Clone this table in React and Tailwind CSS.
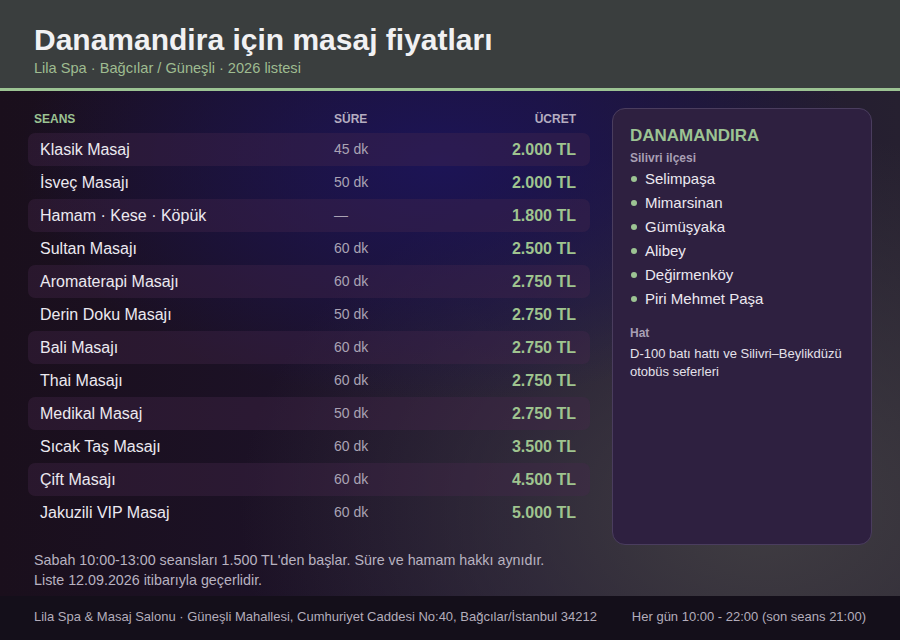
import React from 'react';

const rows = [
  ['Klasik Masaj', '45 dk', '2.000 TL'],
  ['İsveç Masajı', '50 dk', '2.000 TL'],
  ['Hamam · Kese · Köpük', '—', '1.800 TL'],
  ['Sultan Masajı', '60 dk', '2.500 TL'],
  ['Aromaterapi Masajı', '60 dk', '2.750 TL'],
  ['Derin Doku Masajı', '50 dk', '2.750 TL'],
  ['Bali Masajı', '60 dk', '2.750 TL'],
  ['Thai Masajı', '60 dk', '2.750 TL'],
  ['Medikal Masaj', '50 dk', '2.750 TL'],
  ['Sıcak Taş Masajı', '60 dk', '3.500 TL'],
  ['Çift Masajı', '60 dk', '4.500 TL'],
  ['Jakuzili VIP Masaj', '60 dk', '5.000 TL'],
];

const areas = ['Selimpaşa', 'Mimarsinan', 'Gümüşyaka', 'Alibey', 'Değirmenköy', 'Piri Mehmet Paşa'];

export default function App() {
  return (
    <div className="w-[900px] h-[640px] flex flex-col overflow-hidden font-['Liberation_Sans',Arial,sans-serif] bg-[#1a1120]">
      {/* Header */}
      <header className="h-[91px] shrink-0 bg-[#3a3e3e] border-b-[3px] border-[#9cc393] px-[34px] pt-[22px]">
        <h1 className="text-[30px] leading-[36px] font-bold text-[#f1f1f3]">Danamandira için masaj fiyatları</h1>
        <p className="text-[14.6px] leading-[18px] mt-[1px] text-[#9fbc91]">Lila Spa · Bağcılar / Güneşli · 2026 listesi</p>
      </header>

      {/* Main */}
      <main className="flex-1 flex flex-col bg-[radial-gradient(ellipse_420px_240px_at_440px_70px,#1c1456_0%,rgba(28,20,86,0)_100%),radial-gradient(ellipse_520px_380px_at_760px_420px,#403d42_0%,rgba(64,61,66,0)_100%),linear-gradient(90deg,#1a0f1c_0%,#1e1430_60%,#262030_100%)]">
        <div className="flex gap-[22px] pl-[28px] pr-[28px] pt-[18px]">
          {/* Price table */}
          <div className="w-[562px] shrink-0">
            <div className="flex items-center h-[20px] px-[6px] text-[12px] font-bold">
              <span className="w-[300px] text-[#9cc393]">SEANS</span>
              <span className="flex-1 text-[#b5adc0]">SÜRE</span>
              <span className="text-[#b5adc0] mr-[8px]">ÜCRET</span>
            </div>
            <div className="mt-[4px] flex flex-col">
              {rows.map(([name, dur, price], i) => (
                <div
                  key={name}
                  className={
                    'flex items-center h-[33px] px-[12px] rounded-[7px] ' +
                    (i % 2 === 0 ? 'bg-[rgba(72,40,78,0.35)]' : '')
                  }
                >
                  <span className="w-[294px] text-[16px] text-[#ece9f0]">{name}</span>
                  <span className="flex-1 text-[14px] text-[#aaa3b4]">{dur}</span>
                  <span className="text-[16px] font-bold text-[#9fc48f] mr-[2px]">{price}</span>
                </div>
              ))}
            </div>
          </div>

          {/* Side card */}
          <aside className="w-[260px] shrink-0 h-[437px] mt-[-1px] rounded-[13px] bg-[#2e2040] border border-[#4a3d5e] px-[17px] pt-[16px]">
            <h2 className="text-[17px] leading-[22px] font-bold text-[#9cc393]">DANAMANDIRA</h2>
            <p className="text-[12px] font-bold text-[#a89fb4] mt-[2px]">Silivri ilçesi</p>
            <ul className="flex flex-col">
              {areas.map((a) => (
                <li key={a} className="flex items-center h-[24px] text-[15px] text-[#ece9f0]">
                  <span className="w-[6px] h-[6px] rounded-full bg-[#9cc393] ml-[1px] mr-[8px]" />
                  {a}
                </li>
              ))}
            </ul>
            <p className="text-[12px] font-bold text-[#a89fb4] mt-[13px]">Hat</p>
            <p className="text-[13px] leading-[18px] text-[#e4e0ea] mt-[3px]">
              D-100 batı hattı ve Silivri–Beylikdüzü otobüs seferleri
            </p>
          </aside>
        </div>

        <div className="mt-auto px-[34px] pb-[6px] text-[14.3px] leading-[20px] text-[#b8b2c0]">
          <p>Sabah 10:00-13:00 seansları 1.500 TL'den başlar. Süre ve hamam hakkı aynıdır.</p>
          <p>Liste 12.09.2026 itibarıyla geçerlidir.</p>
        </div>
      </main>

      {/* Footer */}
      <footer className="h-[44px] shrink-0 bg-[#140f1a] flex items-center justify-between px-[34px] pb-[3px] text-[13px] text-[#b3adbb]">
        <span>Lila Spa &amp; Masaj Salonu · Güneşli Mahallesi, Cumhuriyet Caddesi No:40, Bağcılar/İstanbul 34212</span>
        <span>Her gün 10:00 - 22:00 (son seans 21:00)</span>
      </footer>
    </div>
  );
}
